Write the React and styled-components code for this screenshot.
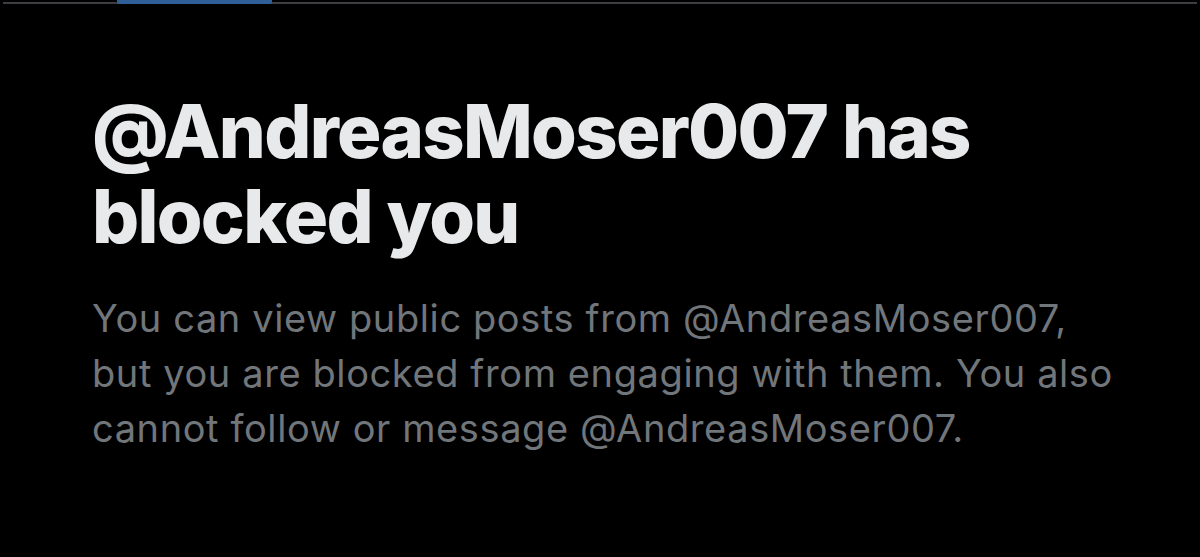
import React from "react";
import styled, { createGlobalStyle } from "styled-components";

const GlobalStyle = createGlobalStyle`
  html, body {
    margin: 0;
    padding: 0;
    background: #000;
  }
`;

const Page = styled.div`
  width: 1200px;
  height: 557px;
  background: #000;
  overflow: hidden;
  display: flex;
  flex-direction: column;
`;

const TopRule = styled.div`
  height: 4px;
  margin: 0 3px;
  display: flex;
  align-items: flex-end;
  border-bottom: 2px solid #3b3d40;
  box-sizing: border-box;
  padding-left: 114px;
`;

const Indicator = styled.div`
  width: 155px;
  height: 4px;
  margin-bottom: -2px;
  background: #2f5f96;
  border-radius: 0 0 2px 2px;
`;

const Content = styled.div`
  padding: 85px 0 0 92px;
  display: flex;
  flex-direction: column;
  gap: 32px;
  font-family: Inter, "Liberation Sans", sans-serif;
`;

const Title = styled.h1`
  margin: 0;
  max-width: 960px;
  font-size: 74px;
  line-height: 85px;
  font-weight: 800;
  letter-spacing: -1.7px;
  color: #e7e9ea;
`;

const Body = styled.p`
  margin: 0;
  max-width: 1030px;
  font-size: 38px;
  line-height: 55px;
  font-weight: 400;
  letter-spacing: 0.6px;
  color: #71767b;
`;

export default function App() {
  return (
    <>
      <GlobalStyle />
      <Page>
        <TopRule>
          <Indicator />
        </TopRule>
        <Content>
          <Title>@AndreasMoser007 has blocked you</Title>
          <Body>
            You can view public posts from @AndreasMoser007, but you are
            blocked from engaging with them. You also cannot follow or message
            @AndreasMoser007.
          </Body>
        </Content>
      </Page>
    </>
  );
}
